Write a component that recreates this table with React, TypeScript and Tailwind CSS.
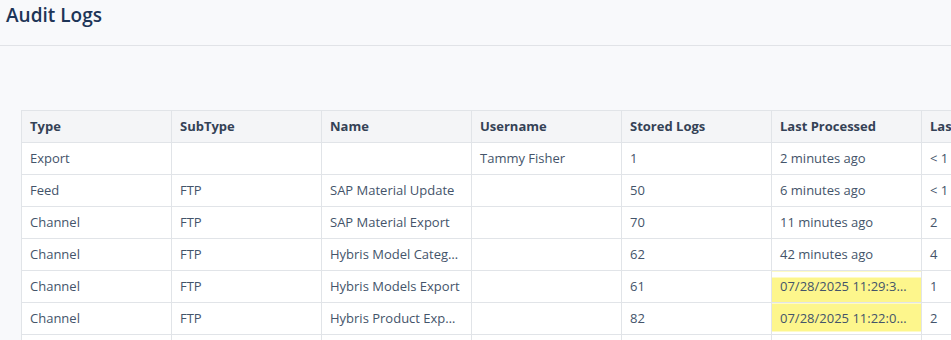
const columns = ['Type', 'SubType', 'Name', 'Username', 'Stored Logs', 'Last Processed', 'Last Duration'];

type Row = {
  type: string;
  subType: string;
  name: string;
  username: string;
  stored: string;
  processed: string;
  duration: string;
  mark?: 'top' | 'bottom';
};

const rows: Row[] = [
  { type: 'Export', subType: '', name: '', username: 'Tammy Fisher', stored: '1', processed: '2 minutes ago', duration: '< 1' },
  { type: 'Feed', subType: 'FTP', name: 'SAP Material Update', username: '', stored: '50', processed: '6 minutes ago', duration: '< 1' },
  { type: 'Channel', subType: 'FTP', name: 'SAP Material Export', username: '', stored: '70', processed: '11 minutes ago', duration: '2' },
  { type: 'Channel', subType: 'FTP', name: 'Hybris Model Category Export', username: '', stored: '62', processed: '42 minutes ago', duration: '4' },
  { type: 'Channel', subType: 'FTP', name: 'Hybris Models Export', username: '', stored: '61', processed: '07/28/2025 11:29:33 AM', duration: '1', mark: 'top' },
  { type: 'Channel', subType: 'FTP', name: 'Hybris Product Export', username: '', stored: '82', processed: '07/28/2025 11:22:07 AM', duration: '2', mark: 'bottom' },
  { type: 'Channel', subType: 'FTP', name: 'Hybris Price Export', username: '', stored: '40', processed: '07/28/2025 10:58:12 AM', duration: '1' },
];

const cell = 'h-8 px-2 py-0 border border-[#e1e4e8] truncate';

const App = () => {
  return (
    <div
      className="w-[951px] h-[340px] overflow-hidden bg-[#f8f9fb]"
      style={{ fontFamily: '"Open Sans", "Noto Sans", sans-serif' }}
    >
      <div className="h-[46px] border-b border-[#e1e3e7] px-[6px] pt-[2px]">
        <h1 className="text-[19px] leading-[26px] font-semibold text-[#1d3557]">Audit Logs</h1>
      </div>

      <div className="pl-[21px] pt-[64px]">
        <table className="table-fixed border-collapse w-[1050px] bg-white text-[13px] text-[#44546a]">
          <colgroup>
            {columns.map((c) => (
              <col key={c} className="w-[150px]" />
            ))}
          </colgroup>
          <thead>
            <tr className="bg-[#f4f5f7]">
              {columns.map((c) => (
                <th key={c} className={`${cell} text-left font-bold text-[#344256]`}>
                  {c}
                </th>
              ))}
            </tr>
          </thead>
          <tbody>
            {rows.map((r, i) => (
              <tr key={i}>
                <td className={cell}>{r.type}</td>
                <td className={cell}>{r.subType}</td>
                <td className={cell}>{r.name}</td>
                <td className={cell}>{r.username}</td>
                <td className={cell}>{r.stored}</td>
                <td
                  className={`${cell} ${
                    r.mark === 'top'
                      ? 'bg-[linear-gradient(to_bottom,transparent_6px,#fdf68c_6px)]'
                      : r.mark === 'bottom'
                        ? 'bg-[linear-gradient(to_bottom,#fdf68c_calc(100%-3px),transparent_calc(100%-3px))]'
                        : ''
                  }`}
                >
                  {r.processed}
                </td>
                <td className={cell}>{r.duration}</td>
              </tr>
            ))}
          </tbody>
        </table>
      </div>
    </div>
  );
};

export default App;
